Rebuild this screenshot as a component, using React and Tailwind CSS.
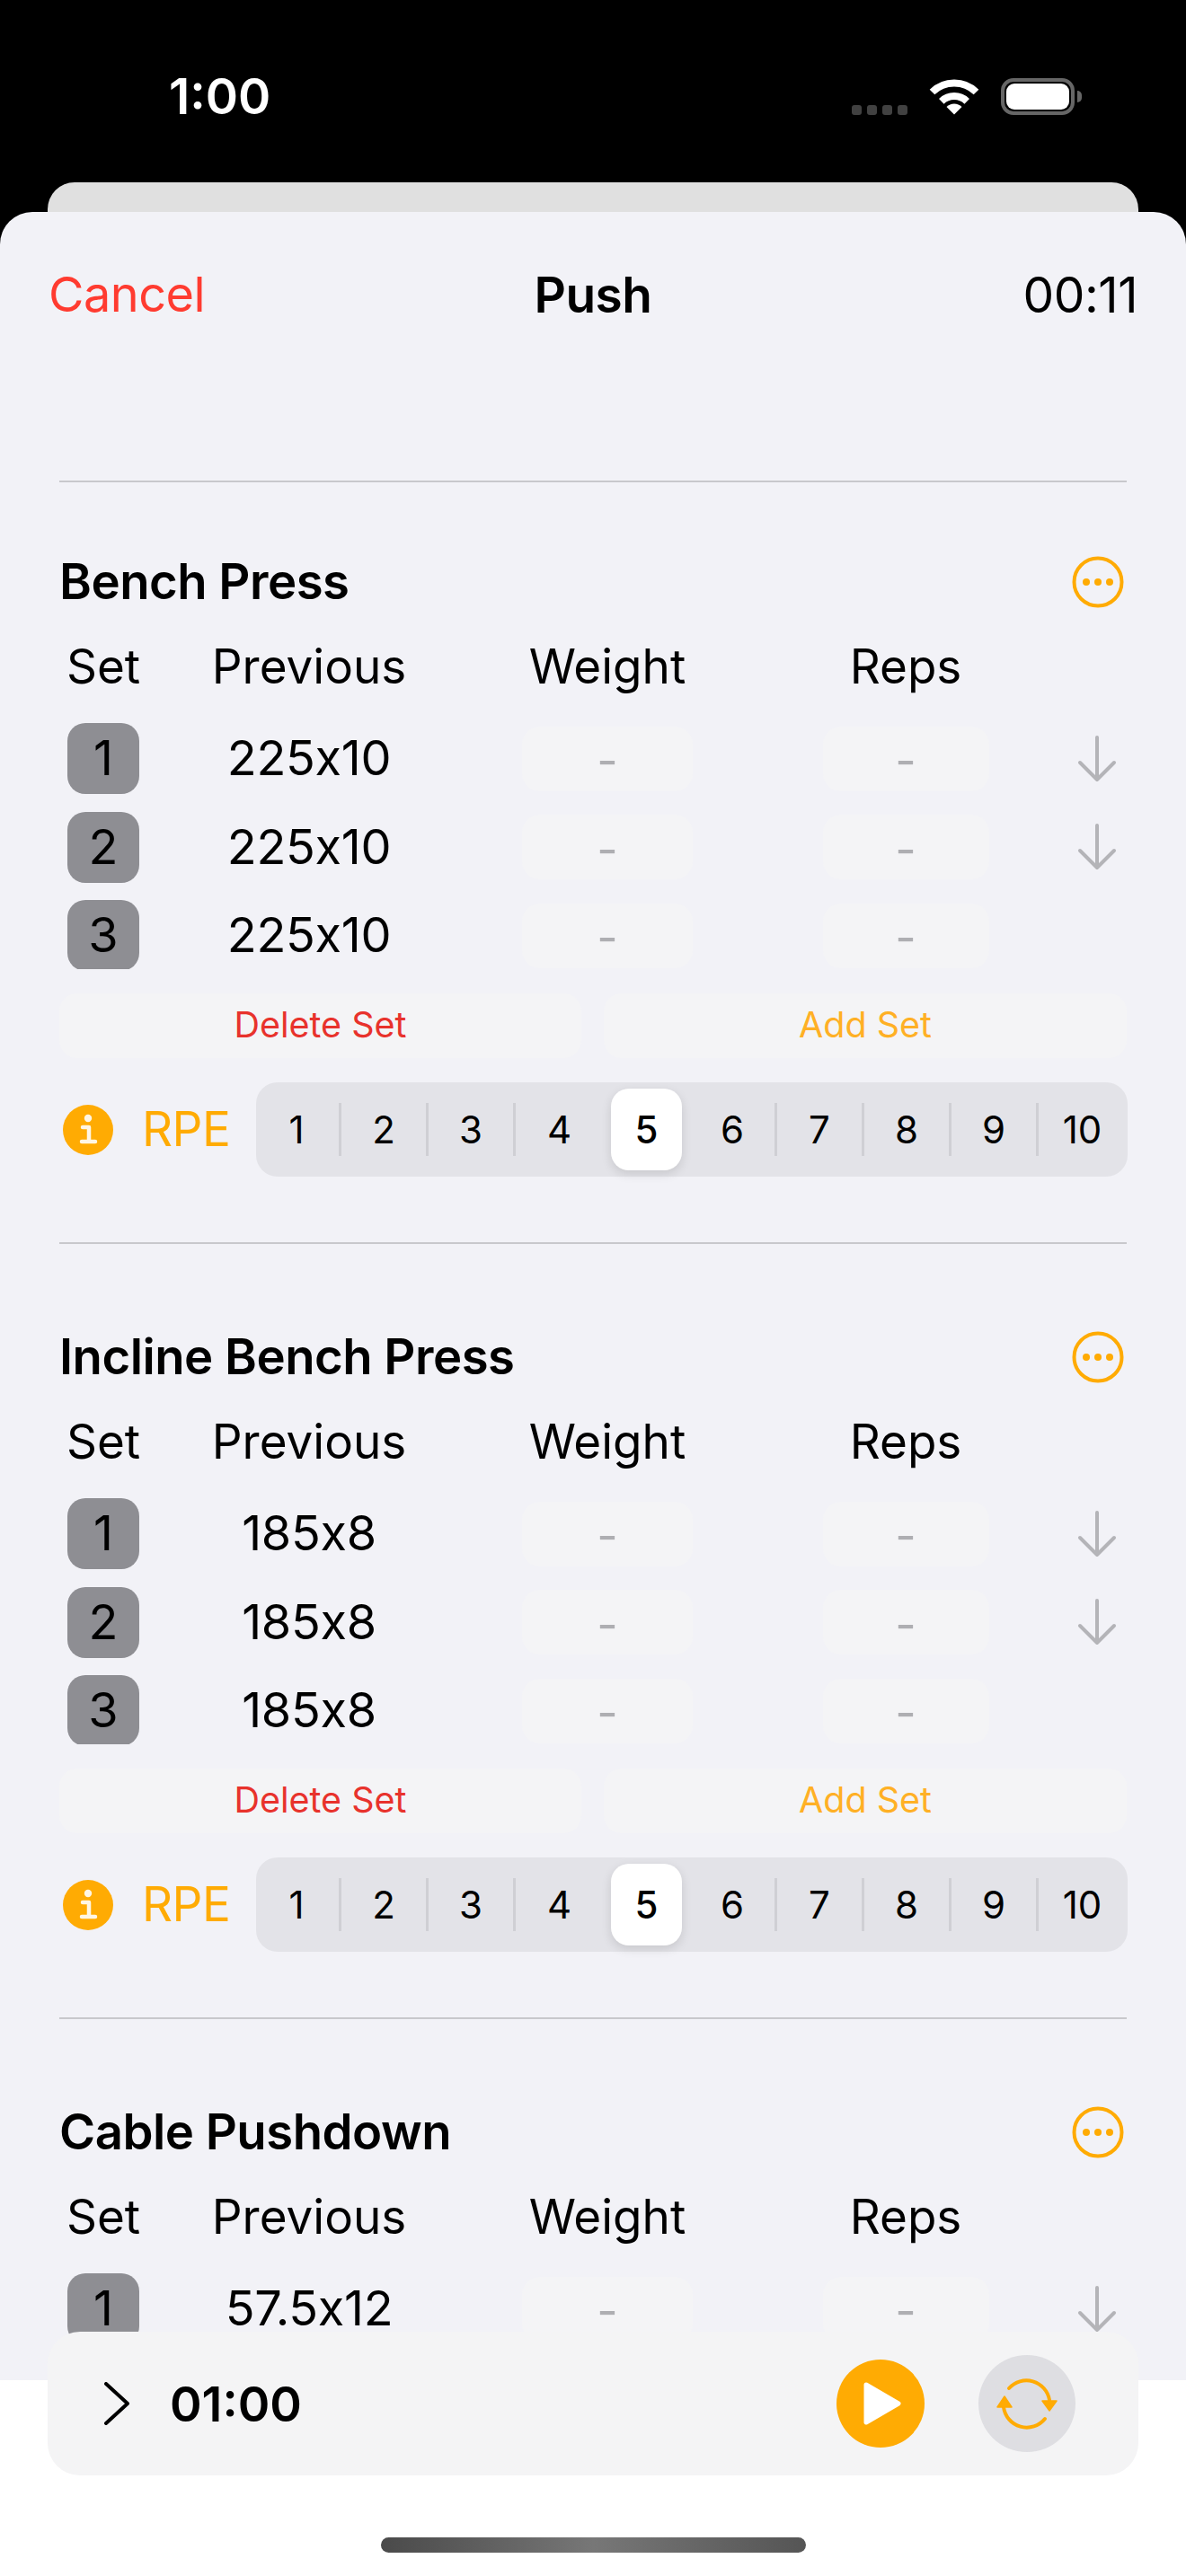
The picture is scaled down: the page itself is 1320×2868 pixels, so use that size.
import React from "react";

const exercises = [
  { name: "Bench Press", prev: "225x10", first: true },
  { name: "Incline Bench Press", prev: "185x8" },
  { name: "Cable Pushdown", prev: "57.5x12", cut: true },
];

function Wifi() {
  return (
    <svg width="56" height="41" viewBox="0 0 56 41">
      <path d="M3.5 15.5 A35 35 0 0 1 52.5 15.5" fill="none" stroke="#fff" strokeWidth="8" />
      <path d="M13.8 25.8 A20.5 20.5 0 0 1 42.2 25.8" fill="none" stroke="#fff" strokeWidth="8" />
      <path d="M28 40.5 L19.5 32 A12 12 0 0 1 36.5 32 Z" fill="#fff" />
    </svg>
  );
}

function Battery() {
  return (
    <div className="flex items-center gap-[3px]">
      <div className="w-[82px] h-[41px] rounded-[14px] border-[4px] border-[#666666] p-[2px]">
        <div className="w-full h-full rounded-[9px] bg-white" />
      </div>
      <div className="w-[5px] h-[13px] rounded-r-full bg-[#666666]" />
    </div>
  );
}

function MoreIcon() {
  return (
    <svg width="58" height="58" viewBox="0 0 58 58">
      <circle cx="29" cy="29" r="26.5" fill="none" stroke="#ffab03" strokeWidth="4" />
      <circle cx="16" cy="29" r="4" fill="#ffab03" />
      <circle cx="29" cy="29" r="4" fill="#ffab03" />
      <circle cx="42" cy="29" r="4" fill="#ffab03" />
    </svg>
  );
}

function DownArrow() {
  return (
    <svg width="44" height="54" viewBox="0 0 44 54">
      <path d="M22 3 V50 M3 31 L22 50 L41 31" fill="none" stroke="#b4b4b8" strokeWidth="4" strokeLinecap="round" strokeLinejoin="round" />
    </svg>
  );
}

function InfoIcon() {
  return (
    <svg width="56" height="56" viewBox="0 0 56 56">
      <circle cx="28" cy="28" r="28" fill="#ffab03" />
      <circle cx="28" cy="15" r="4.2" fill="#fff6e4" />
      <path d="M22 25 H29 V40 M21 41 H36" fill="none" stroke="#fff6e4" strokeWidth="4.5" strokeLinecap="round" strokeLinejoin="round" />
    </svg>
  );
}

function ResetIcon() {
  return (
    <svg width="70" height="60" viewBox="-35 -30 70 60">
      <path d="M-20 -17 A26 26 0 0 1 25 -4" fill="none" stroke="#ffab03" strokeWidth="4" strokeLinecap="round" />
      <path d="M-26 4 A26 26 0 0 0 20 17" fill="none" stroke="#ffab03" strokeWidth="4" strokeLinecap="round" />
      <path d="M17 -3 H33 L25 8 Z" fill="#ffab03" stroke="#ffab03" strokeWidth="1.5" strokeLinejoin="round" />
      <path d="M-33 4 H-17 L-25 -8 Z" fill="#ffab03" stroke="#ffab03" strokeWidth="1.5" strokeLinejoin="round" />
    </svg>
  );
}

function Rpe() {
  const nums = [1, 2, 3, 4, 5, 6, 7, 8, 9, 10];
  return (
    <div className="mt-[27px] mx-[66px] h-[105px] flex items-center">
      <div className="w-[60px] ml-[4px] shrink-0 flex">
        <InfoIcon />
      </div>
      <span className="ml-[28px] w-[127px] shrink-0 text-[53px] text-[#ffab03] tracking-[-0.5px]">RPE</span>
      <div className="w-[970px] h-[105px] rounded-[24px] bg-[#e3e3e8] shrink-0">
        <div className="w-[970px] h-full -ml-[2px] grid grid-cols-10 items-center">
          {nums.map((n) =>
            n === 5 ? (
              <div key={n} className="flex justify-center">
                <div className="w-[79px] h-[91px] rounded-[20px] bg-white shadow-[0_4px_12px_rgba(0,0,0,0.12)] flex items-center justify-center text-[42px] font-medium text-black">
                  {n}
                </div>
              </div>
            ) : (
              <div
                key={n}
                className={
                  n === 4 || n === 10
                    ? "h-[59px] flex items-center justify-center text-[42px] text-black"
                    : "h-[59px] flex items-center justify-center text-[42px] text-black border-r-[3px] border-[#cfcfd4]"
                }
              >
                {n}
              </div>
            )
          )}
        </div>
      </div>
    </div>
  );
}

function SetRow({ n, prev, arrow, clip }) {
  return (
    <div className={clip ? "grid grid-cols-[98px_360px_304px_360px_66px] items-center h-[77px] overflow-hidden" : "grid grid-cols-[98px_360px_304px_360px_66px] items-center h-[79px]"}>
      <div className="flex justify-center self-start">
        <div className="w-[80px] h-[79px] shrink-0 rounded-[20px] bg-[#8e8e93] flex items-center justify-center pb-[1px] text-[54px] leading-[60px] text-black">
          {n}
        </div>
      </div>
      <div className="text-center text-[54px] leading-[60px] pb-[1px] text-black tracking-[-0.3px]">{prev}</div>
      <div className="flex justify-center">
        <div className="w-[190px] h-[72px] rounded-[20px] bg-[#f4f4f6] flex items-center justify-center text-[51px] leading-[60px] pt-[5px] text-[#aeaeb2]">-</div>
      </div>
      <div className="flex justify-center">
        <div className="w-[185px] h-[72px] rounded-[20px] bg-[#f4f4f6] flex items-center justify-center text-[51px] leading-[60px] pt-[5px] text-[#aeaeb2]">-</div>
      </div>
      <div className="flex justify-center">{arrow && <DownArrow />}</div>
    </div>
  );
}

function Exercise({ ex }) {
  return (
    <div className={ex.first ? "pt-[81px] pb-[73px]" : "pt-[96px] pb-[73px]"}>
      <div className="mx-[66px] h-[60px] flex items-center justify-between">
        <span className="text-[54.5px] leading-[60px] pb-[2px] font-semibold text-black tracking-[-0.5px]">{ex.name}</span>
        <span className="flex mr-[3px]">
          <MoreIcon />
        </span>
      </div>
      <div className="mt-[34px] mx-[66px] h-[60px] grid grid-cols-[98px_360px_304px_360px_66px] items-center text-center text-[53px] leading-[60px] text-black">
        <span>Set</span>
        <span>Previous</span>
        <span>Weight</span>
        <span>Reps</span>
      </div>
      <div className="mt-[33px] mx-[66px] flex flex-col gap-[19.5px]">
        <SetRow n={1} prev={ex.prev} arrow />
        {!ex.cut && <SetRow n={2} prev={ex.prev} arrow />}
        {!ex.cut && <SetRow n={3} prev={ex.prev} clip />}
      </div>
      {!ex.cut && (
        <div className="mt-[27px] mx-[66px] grid grid-cols-[581px_582px] gap-[25px]">
          <div className="h-[72px] rounded-[20px] bg-[#f4f4f6] flex items-center justify-center text-[39.5px] text-[#e8322c]">Delete Set</div>
          <div className="h-[72px] rounded-[20px] bg-[#f4f4f6] flex items-center justify-center text-[39.5px] text-[#ffb025]">Add Set</div>
        </div>
      )}
      {!ex.cut && <Rpe />}
    </div>
  );
}

export default function App() {
  return (
    <div className="relative w-[1320px] h-[2868px] overflow-hidden bg-white [font-family:Inter,sans-serif]">
      <div className="bg-black">
        <div className="h-[203px] pt-[80px] pl-[188px] pr-[116px] flex justify-between items-start">
          <span className="text-[55px] leading-[54px] font-semibold text-white">1:00</span>
          <div className="flex items-end gap-[24px] pt-[7px]">
            <div className="flex gap-[6px]">
              <div className="w-[11px] h-[11px] rounded-[3px] bg-[#414141]" />
              <div className="w-[11px] h-[11px] rounded-[3px] bg-[#414141]" />
              <div className="w-[11px] h-[11px] rounded-[3px] bg-[#414141]" />
              <div className="w-[11px] h-[11px] rounded-[3px] bg-[#414141]" />
            </div>
            <Wifi />
            <Battery />
          </div>
        </div>
        <div className="mx-[53px] h-[33px] rounded-t-[30px] bg-[#e0e0e0]" />
        <div className="h-[2414px] rounded-t-[36px] bg-[#f2f2f7] overflow-hidden">
          <div className="h-[299px] px-[54px] pt-[62px]">
            <div className="h-[60px] leading-[60px] grid grid-cols-3 items-center">
              <span className="text-[54px] text-[#ff3b30] tracking-[-0.5px]">Cancel</span>
              <span className="text-center text-[55px] font-semibold text-black tracking-[-0.5px]">Push</span>
              <span className="text-right text-[55px] text-black tracking-[-0.5px]">00:11</span>
            </div>
          </div>
          {exercises.map((ex) => (
            <div key={ex.name}>
              <div className="mx-[66px] h-[2px] bg-[#c8c8cc]" />
              <Exercise ex={ex} />
            </div>
          ))}
        </div>
      </div>

      <div className="flex justify-center pt-[175px]">
        <div className="w-[473px] h-[17px] rounded-full bg-gradient-to-r from-[#4a4a4a] via-[#777777] to-[#555555]" />
      </div>

      <div className="absolute left-[53px] top-[2596px] w-[1214px] h-[160px] rounded-[36px] bg-[#f4f4f5] flex items-center pl-[62px] pr-[70px]">
        <svg width="30" height="48" viewBox="0 0 30 48" className="shrink-0">
          <path d="M3 2 L27 24 L3 46" fill="none" stroke="#000" strokeWidth="4" strokeLinecap="round" strokeLinejoin="round" />
        </svg>
        <span className="ml-[44px] text-[54px] font-semibold text-black">01:00</span>
        <div className="ml-auto w-[98px] h-[98px] rounded-full bg-[#ffab03] flex items-center justify-center">
          <svg width="44" height="50" viewBox="0 0 44 50" className="ml-[4px]">
            <path d="M4 4 L40 25 L4 46 Z" fill="#fff" stroke="#fff" strokeWidth="5" strokeLinejoin="round" />
          </svg>
        </div>
        <div className="ml-[60px] w-[108px] h-[108px] rounded-full bg-[#dedee2] flex items-center justify-center">
          <ResetIcon />
        </div>
      </div>
    </div>
  );
}
